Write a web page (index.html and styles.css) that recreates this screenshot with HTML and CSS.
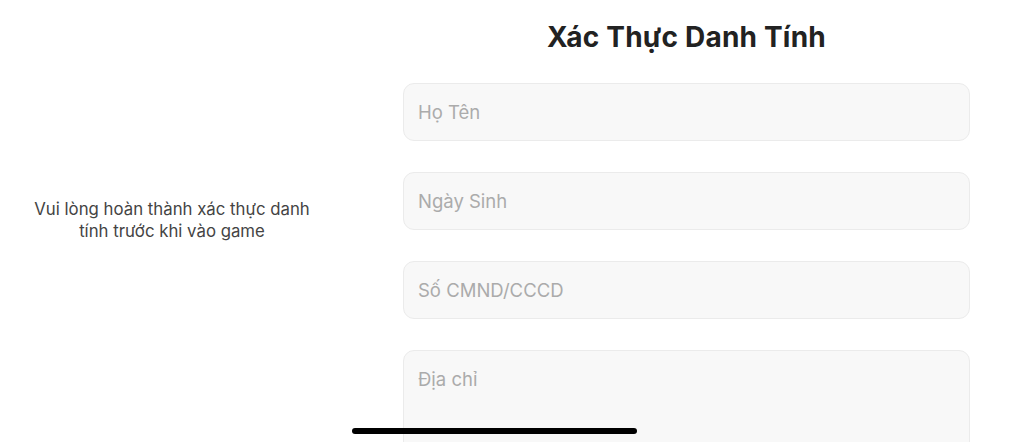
FILE: index.html
```html
<!DOCTYPE html>
<html lang="vi">
<head>
<meta charset="utf-8">
<link rel="stylesheet" href="styles.css">
</head>
<body>
<div class="screen">
  <aside class="side">
    <p class="side-text">Vui lòng hoàn thành xác thực danh<br>tính trước khi vào game</p>
  </aside>
  <main class="form">
    <h1 class="title">Xác Thực Danh Tính</h1>
    <div class="field"><span class="ph">Họ Tên</span></div>
    <div class="field"><span class="ph">Ngày Sinh</span></div>
    <div class="field"><span class="ph">Số CMND/CCCD</span></div>
    <div class="field field-area"><span class="ph">Địa chỉ</span></div>
  </main>
  <div class="home-indicator"></div>
</div>
</body>
</html>
```
FILE: styles.css
```css
html, body {
  margin: 0;
  padding: 0;
  background: #ffffff;
}
body {
  font-family: Inter, "Noto Sans", sans-serif;
  overflow: hidden;
}
.screen {
  position: relative;
  width: 1024px;
  height: 442px;
  display: flex;
  overflow: hidden;
}
.side {
  width: 354px;
  flex: none;
  display: flex;
  align-items: center;
  justify-content: center;
  padding-right: 10px;
  box-sizing: border-box;
}
.side-text {
  margin: 0;
  font-size: 16.8px;
  line-height: 21.5px;
  color: #444444;
  text-align: center;
  padding-bottom: 1px;
}
.form {
  width: 567px;
  margin-left: 49px;
  display: flex;
  flex-direction: column;
  gap: 31px;
}
.title {
  margin: 21px 0 -1px;
  font-size: 28px;
  line-height: 32px;
  letter-spacing: 0.2px;
  font-weight: 700;
  color: #222222;
  text-align: center;
}
.field {
  box-sizing: border-box;
  height: 58px;
  background: #f8f8f8;
  border: 1px solid #ebebeb;
  border-radius: 11px;
  padding: 0 14px;
  display: flex;
  align-items: center;
  flex: none;
}
.field-area {
  height: 110px;
  align-items: flex-start;
  padding-top: 17px;
}
.ph {
  font-size: 18.5px;
  color: #ababab;
}
.home-indicator {
  position: absolute;
  left: 352px;
  top: 428px;
  width: 285px;
  height: 6px;
  border-radius: 3px;
  background: #000000;
}
```
